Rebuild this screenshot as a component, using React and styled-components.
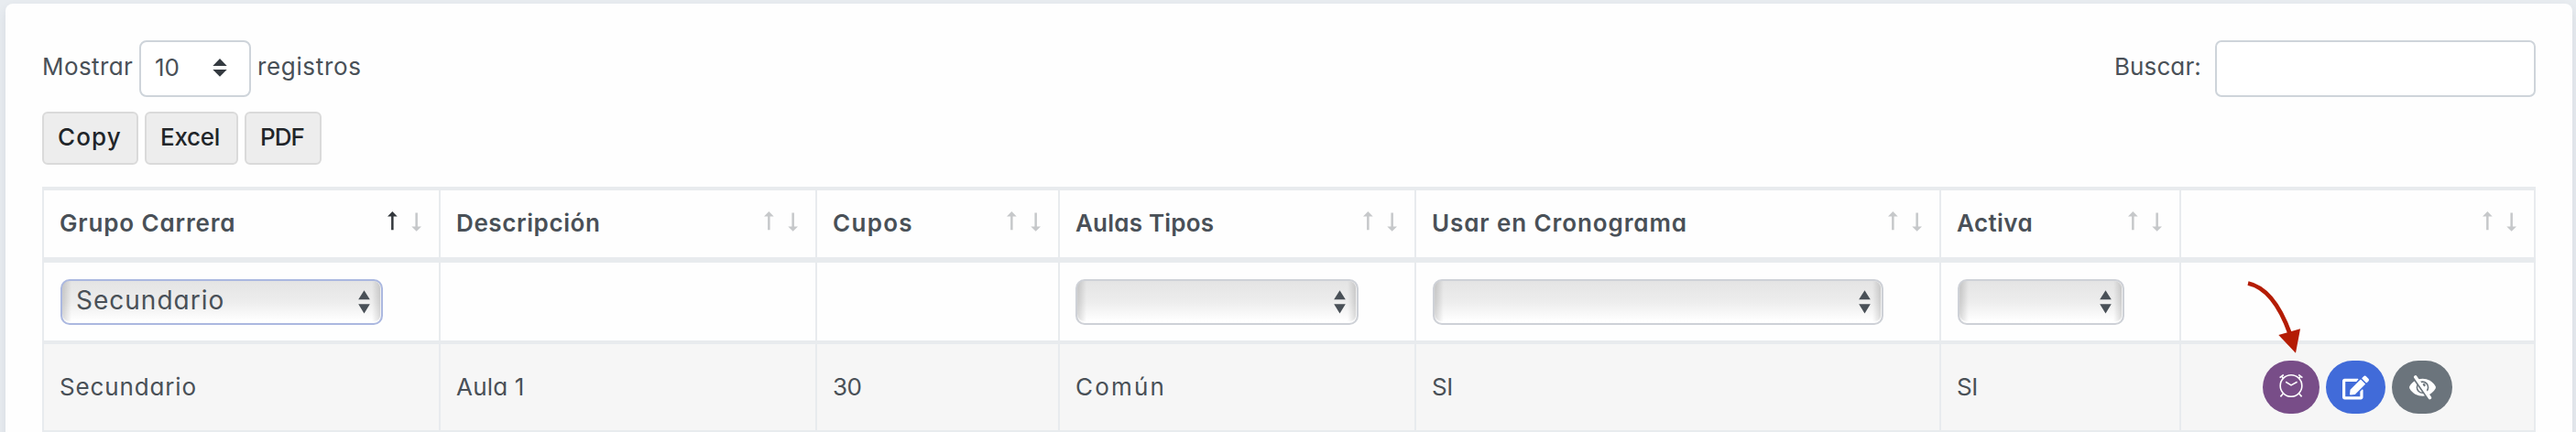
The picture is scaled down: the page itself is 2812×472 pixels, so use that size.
import React from 'react';
import styled, { createGlobalStyle } from 'styled-components';
import { FaEdit } from 'react-icons/fa';

const line = '#e8ebee';
const ink = '#495057';

const GlobalStyle = createGlobalStyle`
  * { box-sizing: border-box; }
  html, body { margin: 0; height: 100%; overflow: hidden; }
  body {
    background: #e8ecf0;
    color: ${ink};
    font: 400 26px/36px Inter, "Liberation Sans", sans-serif;
    font-feature-settings: "cv11";
  }
`;

const Page = styled.div`
  height: 472px;
  padding: 4px 4px 0 6px;
  overflow: hidden;
`;

const Card = styled.main`
  height: 500px;
  padding: 40px 40px 0;
  background: #fefefe;
  border-radius: 8px;
  box-shadow: 0 6px 12px rgba(60, 70, 100, 0.1);
`;

const Text = styled.span`
  letter-spacing: ${(p) => p.$track || 0}px;
  white-space: nowrap;
`;

const Controls = styled.div`
  display: flex;
  justify-content: space-between;
  height: 62px;
`;

const LengthControl = styled.div`
  display: flex;
  align-items: center;
`;

const ControlLabel = styled(Text)`
  width: ${(p) => p.$width}px;
  padding-bottom: 4px;
`;

const LengthSelect = styled.div`
  display: flex;
  align-items: center;
  justify-content: space-between;
  width: 122px;
  height: 62px;
  margin-right: 7px;
  padding: 0 24px 2px 15px;
  background: #fff;
  border: 2px solid #ced4da;
  border-radius: 8px;
`;

const SearchInput = styled.input`
  width: 350px;
  height: 62px;
  padding: 0 16px;
  background: #fff;
  border: 2px solid #ced4da;
  border-radius: 7px;
  font: inherit;
  color: inherit;
  outline: none;
`;

const ExportBar = styled.div`
  display: flex;
  gap: 7px;
  margin-top: 16px;
`;

const ExportButton = styled.button`
  width: ${(p) => p.$width}px;
  height: 58px;
  padding: 0 0 2px 15px;
  text-align: left;
  background: #ededed;
  border: 2px solid #dadada;
  border-radius: 6px;
  color: #212529;
  font: inherit;
  font-weight: 540;
  font-feature-settings: inherit;
`;

const Table = styled.section`
  margin-top: 24px;
  border-top: 4px solid ${line};
  border-left: 2px solid ${line};
`;

const Row = styled.div`
  display: grid;
  grid-template-columns: 433px 411px 265px 389px 573px 262px 387px;
`;

const Cell = styled.div`
  display: flex;
  align-items: center;
  padding-left: 17px;
  border-right: 2px solid ${line};
`;

const HeadRow = styled(Row)`
  height: 79px;
  border-bottom: 6px solid ${line};
  font-weight: 560;
`;

const HeadCell = styled(Cell)`
  padding-right: 19px;
  justify-content: space-between;
`;

const FilterRow = styled(Row)`
  height: 89px;
  border-bottom: 4px solid ${line};
`;

const FilterSelect = styled.div`
  display: flex;
  align-items: center;
  justify-content: space-between;
  width: ${(p) => p.$width}px;
  height: 50px;
  margin-left: ${(p) => p.$indent ?? 1}px;
  padding: 0 12px 0 15px;
  border: 2px solid ${(p) => (p.$active ? '#abb8e0' : '#ced1d7')};
  border-radius: 10px;
  background:
    linear-gradient(90deg, rgba(0, 0, 0, 0.15), rgba(0, 0, 0, 0) 10px,
      rgba(0, 0, 0, 0) calc(100% - 10px), rgba(0, 0, 0, 0.15)),
    linear-gradient(#e4e4e4, #ededed 50%, #fff 95%);
  box-shadow: inset 0 -2px 1px rgba(255, 255, 255, 0.8), inset -1px 0 0 rgba(255, 255, 255, 0.7);
  font-size: 28px;
`;

const FilterValue = styled(Text)`
  padding-bottom: 3px;
`;

const DataRow = styled(Row)`
  height: 96px;
  background: #f6f6f6;
  border-bottom: 2px solid ${line};
`;

const ValueText = styled(Text)`
  padding-bottom: 1px;
`;

const ActionsCell = styled(Cell)`
  position: relative;
  gap: 7px;
  padding-left: 89px;
`;

const ActionButton = styled.button`
  display: flex;
  align-items: center;
  justify-content: center;
  width: ${(p) => p.$width}px;
  height: 58px;
  padding: 0;
  border: 0;
  border-radius: 30px;
  background: ${(p) => p.$color};
  color: #fff;
`;

const PointerArrow = styled.svg`
  position: absolute;
  left: 69px;
  top: -72px;
`;

const ClockDrawing = styled.svg`
  margin: 0 0 4px -1px;
`;

const SortDrawing = styled.svg`
  margin-bottom: 6px;
`;

function SortIcon({ ascending }) {
  return (
    <SortDrawing width="37" height="22" viewBox="0 0 37 22">
      <path d="M5.35 0 L10.7 5.6 H6.6 V20.2 H4.1 V5.6 H0 Z" fill={ascending ? '#33383d' : '#c6c8ca'} />
      <path d="M31.65 21.8 L26.3 16.4 H30.4 V1.6 H32.9 V16.4 H37 Z" fill="#c6c8ca" />
    </SortDrawing>
  );
}

function Carets({ wide }) {
  return wide ? (
    <svg width="16" height="20" viewBox="0 0 16 20">
      <path d="M8 0 L15.7 8 H0.3 Z M8 19.7 L0.3 12 H15.7 Z" fill="#343a40" />
    </svg>
  ) : (
    <svg width="13" height="26" viewBox="0 0 13 26">
      <path d="M6.5 0.2 L12.8 10.2 H0.2 Z M6.5 25.4 L0.2 15.2 H12.8 Z" fill={ink} />
    </svg>
  );
}

function ClockIcon() {
  return (
    <ClockDrawing width="28" height="27" viewBox="0 0 28 27" fill="none" stroke="#fff" strokeWidth="1.6">
      <circle cx="14" cy="13.5" r="11.8" />
      <path d="M8.2 9.3 L14 12.9 L20.6 9.2 M1.6 4.6 L5.8 1.5 M26.4 4.6 L22.2 1.5 M3.6 3 L5.6 5.4 M24.4 3 L22.4 5.4 M5.4 22 L2.4 25.4 M22.6 22 L25.6 25.4" />
    </ClockDrawing>
  );
}

function HiddenIcon() {
  return (
    <svg width="29" height="27" viewBox="0 0 29 27" fill="none">
      <path d="M0.4 12 C6.5 1 22.5 1 28.6 12 Q29.2 13.2 28.6 14.4 C22.5 25.4 6.5 25.4 0.4 14.4 Q-0.2 13.2 0.4 12 Z" fill="#fff" />
      <circle cx="14.5" cy="13.2" r="6.1" stroke="#6b747c" strokeWidth="1.6" />
      <circle cx="16" cy="10.8" r="1.7" fill="#6b747c" />
      <path d="M4.6 3 L20.6 25.8" stroke="#6b747c" strokeWidth="2.2" />
      <path d="M6.8 1.9 L22.4 24.6" stroke="#fff" strokeWidth="3.6" strokeLinecap="round" />
    </svg>
  );
}

const columns = [
  { title: 'Grupo Carrera', track: 0.85, value: 'Secundario', valueTrack: 0.85, filter: 352, selected: 'Secundario' },
  { title: 'Descripción', track: 0.6, value: 'Aula 1', valueTrack: 0.2 },
  { title: 'Cupos', track: 1.3, value: '30', valueTrack: -0.5 },
  { title: 'Aulas Tipos', track: 0.2, value: 'Común', valueTrack: 2.2, filter: 309, indent: 0 },
  { title: 'Usar en Cronograma', track: 0.9, value: 'SI', valueTrack: -0.5, filter: 492 },
  { title: 'Activa', track: 0.4, value: 'SI', valueTrack: -0.5, filter: 182 },
  { title: '' },
];

export default function App() {
  return (
    <Page>
      <GlobalStyle />
      <Card>
        <Controls>
          <LengthControl>
            <ControlLabel $width={106} $track={0.4}>Mostrar</ControlLabel>
            <LengthSelect>
              <Text>10</Text>
              <Carets wide />
            </LengthSelect>
            <ControlLabel $track={0.65}>registros</ControlLabel>
          </LengthControl>
          <LengthControl>
            <ControlLabel $width={110} $track={0.1}>Buscar:</ControlLabel>
            <SearchInput aria-label="Buscar" />
          </LengthControl>
        </Controls>
        <ExportBar>
          <ExportButton $width={105}><Text $track={1.1}>Copy</Text></ExportButton>
          <ExportButton $width={102}><Text $track={-0.3}>Excel</Text></ExportButton>
          <ExportButton $width={84}><Text $track={-1}>PDF</Text></ExportButton>
        </ExportBar>
        <Table>
          <HeadRow>
            {columns.map((c, i) => (
              <HeadCell key={i}>
                <ValueText $track={c.track}>{c.title}</ValueText>
                <SortIcon ascending={i === 0} />
              </HeadCell>
            ))}
          </HeadRow>
          <FilterRow>
            {columns.map((c, i) => (
              <Cell key={i}>
                {c.filter && (
                  <FilterSelect $width={c.filter} $indent={c.indent} $active={!!c.selected}>
                    <FilterValue $track={1}>{c.selected}</FilterValue>
                    <Carets />
                  </FilterSelect>
                )}
              </Cell>
            ))}
          </FilterRow>
          <DataRow>
            {columns.slice(0, 6).map((c, i) => (
              <Cell key={i}>
                <ValueText $track={c.valueTrack}>{c.value}</ValueText>
              </Cell>
            ))}
            <ActionsCell>
              <ActionButton $width={62} $color="#784d88" aria-label="Horarios"><ClockIcon /></ActionButton>
              <ActionButton $width={65} $color="#416bd9" aria-label="Editar"><FaEdit size={29} /></ActionButton>
              <ActionButton $width={66} $color="#6b747c" aria-label="Ocultar"><HiddenIcon /></ActionButton>
              <PointerArrow width="66" height="84" viewBox="0 0 66 84">
                <path d="M4 5.5 C25 10 39 31 49.5 60" fill="none" stroke="#b41c04" strokeWidth="4.8" />
                <path d="M37.3 62 L61 55.3 L56 81.7 Z" fill="#b41c04" />
              </PointerArrow>
            </ActionsCell>
          </DataRow>
        </Table>
      </Card>
    </Page>
  );
}
